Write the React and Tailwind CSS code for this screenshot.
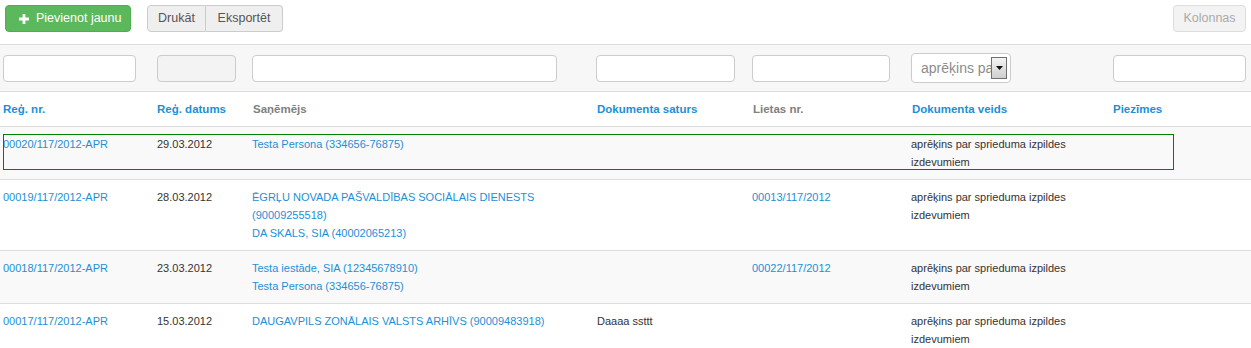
import React from 'react';

const LINK = 'text-[#1d8fd6]';

const rows = [
  {
    nr: '00020/117/2012-APR',
    date: '29.03.2012',
    people: ['Testa Persona (334656-76875)'],
    content: '',
    caseNr: '',
    type: ['aprēķins par sprieduma izpildes', 'izdevumiem'],
    striped: true,
    focused: true,
  },
  {
    nr: '00019/117/2012-APR',
    date: '28.03.2012',
    people: ['ĒGRĻU NOVADA PAŠVALDĪBAS SOCIĀLAIS DIENESTS', '(90009255518)', 'DA SKALS, SIA (40002065213)'],
    content: '',
    caseNr: '00013/117/2012',
    type: ['aprēķins par sprieduma izpildes', 'izdevumiem'],
  },
  {
    nr: '00018/117/2012-APR',
    date: '23.03.2012',
    people: ['Testa iestāde, SIA (12345678910)', 'Testa Persona (334656-76875)'],
    content: '',
    caseNr: '00022/117/2012',
    type: ['aprēķins par sprieduma izpildes', 'izdevumiem'],
    striped: true,
  },
  {
    nr: '00017/117/2012-APR',
    date: '15.03.2012',
    people: ['DAUGAVPILS ZONĀLAIS VALSTS ARHĪVS (90009483918)'],
    content: 'Daaaa ssttt',
    caseNr: '',
    type: ['aprēķins par sprieduma izpildes', 'izdevumiem'],
  },
];

const grid = 'grid grid-cols-[154px_96px_344px_156px_159px_201px_1fr]';

function Input({ className = '' }) {
  return (
    <div className={`h-[27px] rounded-[4px] border border-[#cccccc] ${className}`} />
  );
}

export default function App() {
  return (
    <div className="w-[1251px] h-[348px] overflow-hidden bg-white font-['Liberation_Sans',Arial,sans-serif]">
      {/* toolbar */}
      <div className="flex items-start h-[45px] pt-[5px] px-[5px] border-b border-[#dddddd]">
        <button className="flex items-center gap-[7px] h-[27px] w-[126px] pl-[13px] rounded-[4px] border border-[#4cae4c] bg-[#5cb85c] text-white text-[12.5px]">
          <svg width="10" height="10" viewBox="0 0 10 10">
            <path d="M3.6 0h2.8v3.6H10v2.8H6.4V10H3.6V6.4H0V3.6h3.6z" fill="white" />
          </svg>
          Pievienot jaunu
        </button>
        <div className="flex ml-[16px] h-[27px] text-[12.5px] text-[#555555]">
          <button className="w-[59px] rounded-l-[4px] border border-[#cccccc] bg-[#efefef]">Drukāt</button>
          <button className="w-[77px] rounded-r-[4px] border border-l-0 border-[#cccccc] bg-[#efefef]">Eksportēt</button>
        </div>
        <button className="ml-auto w-[73px] h-[27px] rounded-[4px] border border-[#dddddd] bg-[#f3f3f3] text-[12.5px] text-[#aaaaaa]">
          Kolonnas
        </button>
      </div>

      {/* filters */}
      <div className={`${grid} h-[47px] bg-[#f7f7f7] border-b border-[#dddddd] items-start`}>
        <div className="pl-[3px] pr-[18px] pt-[10px]"><Input className="bg-white" /></div>
        <div className="pl-[3px] pr-[14px] pt-[10px]"><Input className="bg-[#f3f3f3]" /></div>
        <div className="pl-[2px] pr-[37px] pt-[10px]"><Input className="bg-white" /></div>
        <div className="pl-[2px] pr-[15px] pt-[10px]"><Input className="bg-white" /></div>
        <div className="pl-[2px] pr-[19px] pt-[10px]"><Input className="bg-white" /></div>
        <div className="pl-[2px] pt-[8px]">
          <div className="relative w-[100px] h-[30px] rounded-[4px] border border-[#cccccc] bg-white overflow-hidden">
            <span className="absolute left-[9px] top-[5px] text-[14px] leading-[18px] text-[#8c8c8c] whitespace-nowrap">aprēķins par</span>
            <div className="absolute left-[79px] top-[3px] w-[16px] h-[22px] border border-[#6f6f6f] bg-gradient-to-b from-[#f4f4f4] to-[#cfcfcf] flex items-center justify-center">
              <svg width="7" height="4" viewBox="0 0 7 4"><path d="M0 0h7L3.5 4z" fill="#111" /></svg>
            </div>
          </div>
        </div>
        <div className="pl-[3px] pr-[5px] pt-[10px]"><Input className="bg-white" /></div>
      </div>

      {/* header */}
      <div className={`${grid} py-2 leading-[18px] text-[11.5px] font-bold border-b border-[#dddddd]`}>
        <div className={`pl-[3px] ${LINK}`}>Reģ. nr.</div>
        <div className={`pl-[3px] ${LINK}`}>Reģ. datums</div>
        <div className="pl-[3px] text-[#808080]">Saņēmējs</div>
        <div className={`pl-[3px] ${LINK}`}>Dokumenta saturs</div>
        <div className="pl-[3px] text-[#808080]">Lietas nr.</div>
        <div className={`pl-[3px] ${LINK}`}>Dokumenta veids</div>
        <div className={`pl-[3px] ${LINK}`}>Piezīmes</div>
      </div>

      {/* rows */}
      {rows.map((r) => (
        <div
          key={r.nr}
          className={`relative ${grid} py-2 leading-[18px] text-[11px] text-[#333333] border-b border-[#dddddd] ${r.striped ? 'bg-[#f9f9f9]' : 'bg-white'}`}
        >
          {r.focused && (
            <div className="absolute left-[3px] top-[7px] w-[1171px] h-[36px] border border-[#008000]" />
          )}
          <div className={`pl-[3px] ${LINK}`}>{r.nr}</div>
          <div className="pl-[3px]">{r.date}</div>
          <div className={`pl-[2px] ${LINK}`}>
            {r.people.map((p) => (
              <div key={p}>{p}</div>
            ))}
          </div>
          <div className="pl-[3px]">{r.content}</div>
          <div className={`pl-[2px] ${LINK}`}>{r.caseNr}</div>
          <div className="pl-[2px]">
            {r.type.map((t) => (
              <div key={t}>{t}</div>
            ))}
          </div>
          <div />
        </div>
      ))}
    </div>
  );
}
